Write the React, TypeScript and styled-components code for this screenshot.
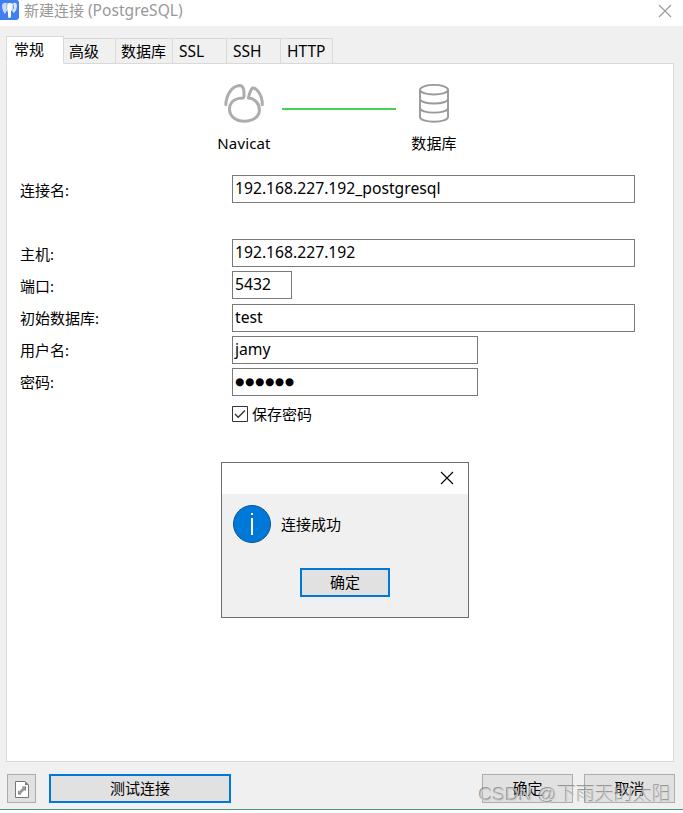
import React from "react";
import styled, { createGlobalStyle, css } from "styled-components";

const Global = createGlobalStyle`
  * { box-sizing: border-box; }
  body { margin: 0; background: #fff; overflow: hidden; }
  body, button {
    font-family: "Noto Sans", "Noto Sans CJK SC", sans-serif;
    font-size: 15px;
    color: #000;
  }
`;

const Window = styled.main`
  position: relative;
  display: flex;
  flex-direction: column;
  width: 683px;
  height: 810px;
  background: #f0f0f0;
  border-bottom: 1px solid #4f9a83;
`;

const TitleBar = styled.header`
  display: flex;
  align-items: flex-start;
  height: 26px;
  background: #fff;
  color: #999;
`;

const Title = styled.h1`
  flex: 1;
  margin: 0 0 0 5px;
  font-size: 15px;
  font-weight: 400;
  line-height: 21px;
`;

const Product = styled.span`
  font-size: 15.6px;
`;

const TitleClose = styled.svg`
  margin: 4px 11px 0 0;
`;

const Tabs = styled.nav`
  display: flex;
  align-items: flex-end;
  height: 38px;
  padding-left: 6px;
`;

const Tab = styled.div<{ $width: number; $active?: boolean; $latin?: boolean }>`
  width: ${(p) => p.$width}px;
  height: 26px;
  padding-left: ${(p) => (p.$latin ? 6 : 5)}px;
  border: 1px solid #d9d9d9;
  border-left: 0;
  font-size: ${(p) => (p.$latin ? 15.5 : 15)}px;
  line-height: 25px;
  white-space: nowrap;
  ${(p) =>
    p.$active &&
    css`
      z-index: 1;
      height: 28px;
      padding-left: 7px;
      background: #fff;
      border-left: 1px solid #d9d9d9;
      border-bottom-color: #fff;
    `}
`;

const Panel = styled.section`
  width: 668px;
  height: 699px;
  margin: -1px 0 0 6px;
  padding-top: 17px;
  background: #fff;
  border: 1px solid #d9d9d9;
`;

const Diagram = styled.div`
  display: grid;
  grid-template-columns: 80px 112px 76px;
  margin-left: 197px;
  height: 94px;
`;

const Endpoint = styled.div`
  display: flex;
  flex-direction: column;
  align-items: center;
  line-height: 22px;
  gap: 9px;
  letter-spacing: 0.15px;
`;

const Link = styled.div`
  height: 2px;
  margin: 27px 0 0 -2px;
  background: #48cf55;
`;

const Row = styled.div<{ $gap?: number }>`
  display: grid;
  grid-template-columns: 212px 1fr;
  height: 28px;
  margin: 0 0 ${(p) => p.$gap ?? 4}px 13px;
`;

const Label = styled.label<{ $drop?: boolean }>`
  line-height: ${(p) => (p.$drop ? 31 : 29)}px;
`;

const Field = styled.div<{ $width: number }>`
  width: ${(p) => p.$width}px;
  height: 28px;
  padding-left: 2px;
  border: 1px solid #7a7a7a;
  font-size: 15.7px;
  line-height: 25px;
`;

const Mask = styled.span`
  display: block;
  font-family: "DejaVu Sans", sans-serif;
  font-size: 10.5px;
  letter-spacing: 0.8px;
  line-height: 25px;
`;

const CheckRow = styled.label`
  display: flex;
  align-items: center;
  gap: 4px;
  height: 20px;
  margin-left: 225px;
  line-height: 20px;
`;

const Button = styled.button<{ $width: number; $primary?: boolean }>`
  display: flex;
  align-items: center;
  justify-content: center;
  width: ${(p) => p.$width}px;
  height: 29px;
  padding: 0 0 2px;
  background: #e1e1e1;
  border: ${(p) => (p.$primary ? "2px solid #0078d7" : "1px solid #adadad")};
  line-height: 22px;
`;

const IconButton = styled(Button)`
  padding: 2px 0 0 1px;
`;

const Footer = styled.footer`
  display: flex;
  align-items: flex-start;
  padding: 12px 8px 0 7px;
`;

const FooterGap = styled.div<{ $width: number }>`
  width: ${(p) => p.$width}px;
`;

const Dialog = styled.div`
  position: absolute;
  left: 221px;
  top: 462px;
  width: 248px;
  height: 156px;
  background: #f0f0f0;
  border: 1px solid #6d6d6d;
`;

const DialogBar = styled.div`
  display: flex;
  justify-content: flex-end;
  height: 31px;
  padding: 8px 14px 0 0;
  background: #fff;
`;

const Message = styled.div`
  display: flex;
  align-items: center;
  gap: 10px;
  height: 40px;
  margin: 10px 0 24px 11px;
`;

const MessageText = styled.p`
  margin: 0 0 2px;
`;

const DialogActions = styled.div`
  display: flex;
  justify-content: center;
`;

const Watermark = styled.div`
  position: absolute;
  left: 479px;
  top: 781px;
  font-family: "Liberation Sans", "Noto Sans CJK SC", sans-serif;
  font-size: 19px;
  font-weight: 300;
  line-height: 28px;
  color: rgba(205, 205, 205, 0.75);
  text-shadow: -1px -1px 0 rgba(110, 110, 110, 0.65);
  white-space: nowrap;
  pointer-events: none;
`;

const Cross = ({ color }: { color: string }) => (
  <path d="M1 1 13 13M13 1 1 13" stroke={color} strokeWidth="1.1" fill="none" />
);

const ElephantIcon = () => (
  <svg width="19" height="20" viewBox="0 0 19 20">
    <path d="M0 0H17Q19 0 19 3V17Q19 20 16 20H0Z" fill="#3f7ff0" />
    <path d="M2 5Q3 2 7 3L8 7 6 12 5 14Q2 11 2 5Z" fill="#c9dcfc" />
    <path d="M7 4Q10 2 13 4L13 9 11 11V17Q9 19 8 17V12L6 10Z" fill="#fff" />
    <path d="M13 3Q17 2 17 6 17 10 14 13L12 11 14 8Z" fill="#d8e6fd" />
    <path d="M7 4 6.6 9 8 11M13 5V9" stroke="#6b9df4" strokeWidth=".8" fill="none" />
  </svg>
);

const NavicatIcon = () => (
  <svg width="42" height="42" viewBox="0 0 42 42" fill="none" stroke="#adadad" strokeWidth="3" strokeLinecap="round" strokeLinejoin="round">
    <path d="M2.800 23.8C3.2 14 8.500 5.300 16.500 4.600 20.500 4.600 21.400 9 20.900 16 20.500 18 18.500 16.600 15.600 17.400 9.800 18.800 6.500 23 6.500 28.300 6.500 35.500 13.200 40.200 21.400 40.200 29.800 40.200 36.400 35.800 36.400 28.900 36.400 22.500 31.500 17.200 25.400 17.100 26.200 13 27.500 9.300 29.400 7 31.600 6.400 33.800 8.600 35.800 11.400 38.400 15 39.400 19 39.300 23.800" />
  </svg>
);

const DatabaseIcon = () => (
  <svg width="32" height="42" viewBox="0 0 32 42" fill="none" stroke="#999" strokeWidth="1.9">
    <ellipse cx="16" cy="8.7" rx="14" ry="4.8" />
    <path d="M2 9V36C2 38.700 8.300 40.700 16 40.700S30 38.700 30 36V9" />
    <path d="M2 18C2 20.700 8.300 22.500 16 22.500S30 20.700 30 18M2 27C2 29.700 8.300 31.600 16 31.600S30 29.700 30 27" />
  </svg>
);

const InfoIcon = () => (
  <svg width="38" height="38" viewBox="0 0 38 38">
    <circle cx="19" cy="19" r="18.5" fill="#0078d7" stroke="#07559b" />
    <path d="M18 8h2v2h-2zM18 13h2v17h-2z" fill="#fff" />
  </svg>
);

const DocumentIcon = () => (
  <svg width="14" height="17" viewBox="0 0 14 17">
    <path d="M.5.5H10L13.5 4V16.5H.5Z" fill="#fff" stroke="#777" />
    <path d="M10 .5V4H13.5Z" fill="#777" />
    <path d="M7 5.500h4v4H9.500Z M3 9.500 6.500 13.500H3Z" fill="#777" />
    <path d="M4 12.500 10 6.500" stroke="#999" strokeWidth="2.800" />
  </svg>
);

const tabs = [
  { name: "常规", width: 58, active: true },
  { name: "高级", width: 52 },
  { name: "数据库", width: 57 },
  { name: "SSL", width: 54, latin: true },
  { name: "SSH", width: 54, latin: true },
  { name: "HTTP", width: 52, latin: true },
];

const fields = [
  { label: "连接名:", value: "192.168.227.192_postgresql", width: 403, gap: 36, drop: true },
  { label: "主机:", value: "192.168.227.192", width: 403, drop: true },
  { label: "端口:", value: "5432", width: 60, gap: 5, drop: true },
  { label: "初始数据库:", value: "test", width: 403 },
  { label: "用户名:", value: "jamy", width: 246 },
  { label: "密码:", value: "●●●●●●", width: 246, gap: 8, masked: true },
];

export default function App() {
  return (
    <>
      <Global />
      <Window>
        <TitleBar>
          <ElephantIcon />
          <Title>新建连接 <Product>(PostgreSQL)</Product></Title>
          <TitleClose width="14" height="14"><Cross color="#999" /></TitleClose>
        </TitleBar>
        <Tabs>
          {tabs.map((t) => (
            <Tab key={t.name} $width={t.width} $active={t.active} $latin={t.latin}>{t.name}</Tab>
          ))}
        </Tabs>
        <Panel>
          <Diagram>
            <Endpoint><NavicatIcon />Navicat</Endpoint>
            <Link />
            <Endpoint><DatabaseIcon />数据库</Endpoint>
          </Diagram>
          {fields.map((f) => (
            <Row key={f.label} $gap={f.gap}>
              <Label $drop={f.drop}>{f.label}</Label>
              <Field $width={f.width}>{f.masked ? <Mask>{f.value}</Mask> : f.value}</Field>
            </Row>
          ))}
          <CheckRow>
            <svg width="16" height="16" viewBox="0 0 16 16" fill="none">
              <path d="M.5.5H15.5V15.5H.5Z" stroke="#333" />
              <path d="M3 8 6.200 11.300 13 4.500" stroke="#333" strokeWidth="1.300" />
            </svg>
            保存密码
          </CheckRow>
        </Panel>
        <Footer>
          <IconButton $width={29} aria-label="file"><DocumentIcon /></IconButton>
          <FooterGap $width={13} />
          <Button $width={182} $primary>测试连接</Button>
          <FooterGap $width={251} />
          <Button $width={91}>确定</Button>
          <FooterGap $width={11} />
          <Button $width={91}>取消</Button>
        </Footer>
        <Dialog>
          <DialogBar><svg width="14" height="14"><Cross color="#000" /></svg></DialogBar>
          <Message><InfoIcon /><MessageText>连接成功</MessageText></Message>
          <DialogActions><Button $width={90} $primary>确定</Button></DialogActions>
        </Dialog>
        <Watermark>CSDN @下雨天的太阳</Watermark>
      </Window>
    </>
  );
}
